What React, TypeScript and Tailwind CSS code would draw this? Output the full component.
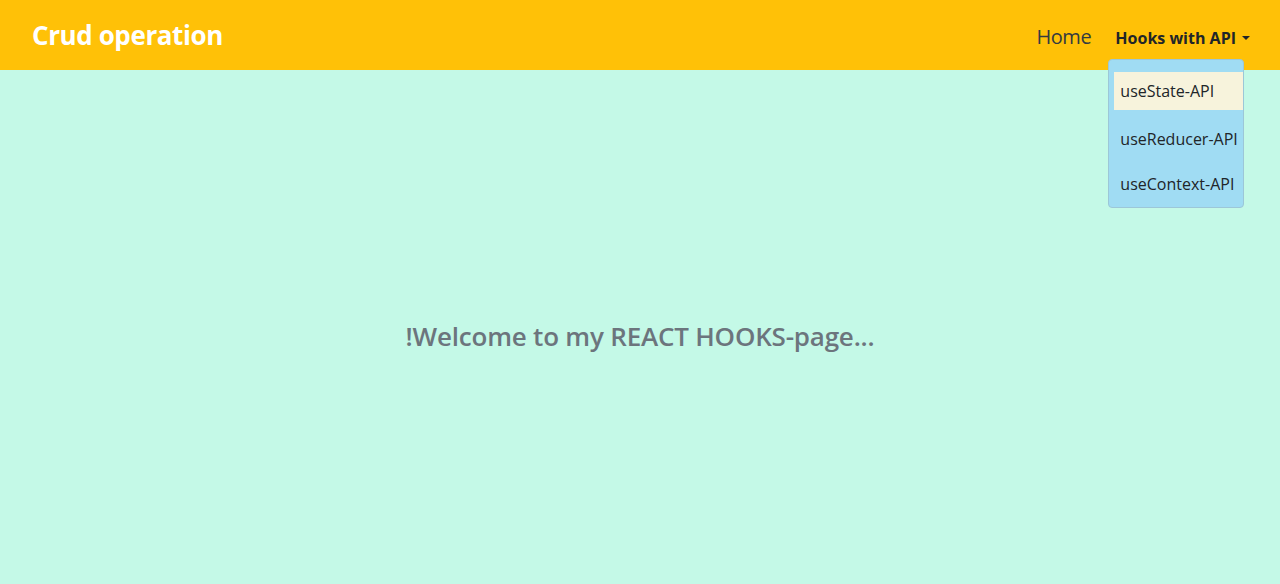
const App = () => {
  return (
    <div className="min-h-[584px] bg-[#c4f9e7] flex flex-col" style={{ fontFamily: '"Open Sans", "Noto Sans", sans-serif' }}>
      <nav className="h-[70px] bg-[#ffc107] flex items-center justify-between pl-[32px] pr-[30px]">
        <a className="text-[26px] font-bold text-white tracking-[-0.4px]">Crud operation</a>
        <div className="flex items-center gap-[24px] pt-[4px]">
          <a className="text-[20px] text-[#343a40] tracking-[-0.4px] pl-[4px]">Home</a>
          <div className="relative">
            <button className="flex items-center gap-[6px] text-[16px] font-bold text-[#212529] pt-[2px]">
              Hooks with API
              <span className="border-x-[4px] border-t-[4px] border-x-transparent border-t-[#212529]" />
            </button>
            <div className="absolute left-[-7px] top-[35px] w-[136px] rounded-[4px] border border-[#9cc7d8] bg-[#a0dcf3] pt-[12px] pb-[1px] pl-[5px] text-[16px] text-[#212529] z-10">
              <div className="h-[38px] flex items-center bg-[#f7f3dc] px-[6px] whitespace-nowrap">useState-API</div>
              <div className="mt-[6px] h-[45px] flex items-center px-[6px] whitespace-nowrap">useReducer-API</div>
              <div className="h-[45px] flex items-center px-[6px] whitespace-nowrap">useContext-API</div>
            </div>
          </div>
        </div>
      </nav>
      <main className="flex-1 flex items-center justify-center pt-[18px]">
        <h2 className="text-[26px] font-semibold text-[#6c757d] tracking-[-0.2px]">!Welcome to my REACT HOOKS-page...</h2>
      </main>
    </div>
  );
};

export default App;
